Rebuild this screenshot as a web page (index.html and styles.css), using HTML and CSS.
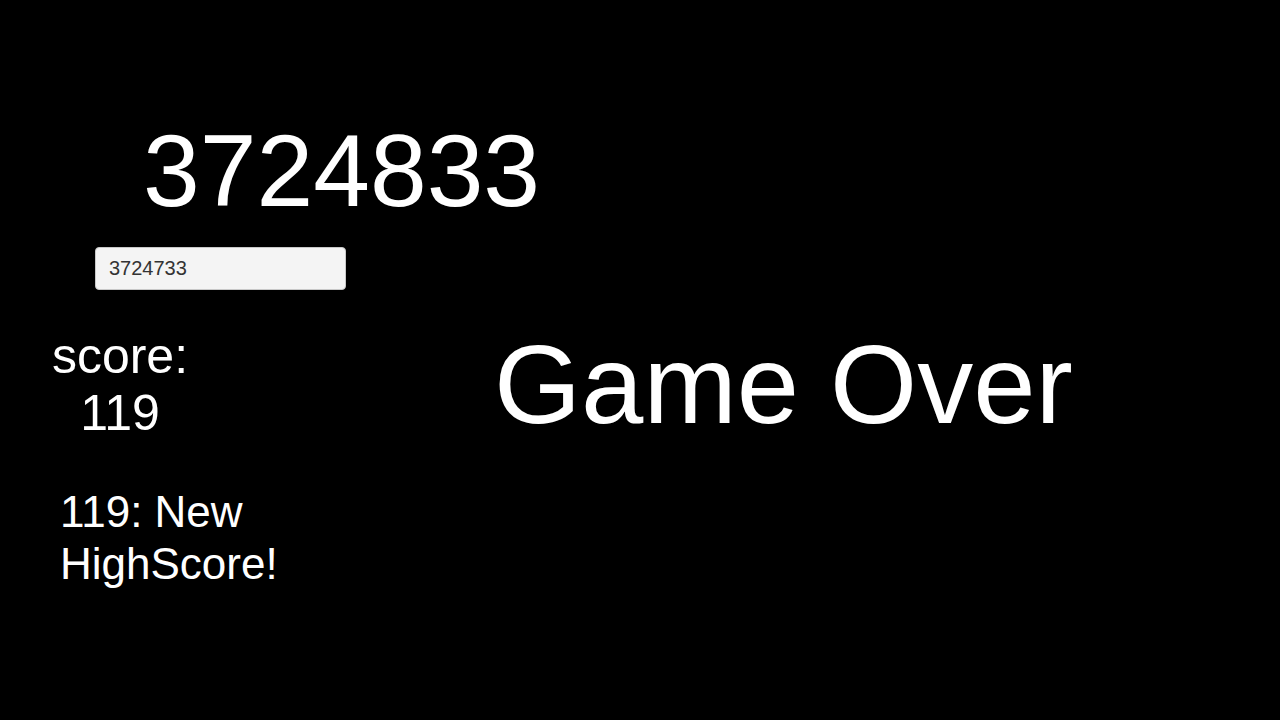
FILE: index.html
```html
<!DOCTYPE html>
<html>
<head>
<meta charset="utf-8">
<link rel="stylesheet" href="styles.css">
</head>
<body>
<div class="page">
  <div class="left">
    <div class="big">3724833</div>
    <input class="field" type="text" value="3724733">
    <div class="score">score:<br>119</div>
    <div class="hs">119: New<br>HighScore!</div>
  </div>
  <div class="right">
    <div class="over">Game Over</div>
  </div>
</div>
</body>
</html>
```
FILE: styles.css
```css
html, body {
  margin: 0;
  padding: 0;
  background: #000;
  width: 1280px;
  height: 720px;
  overflow: hidden;
}
.page {
  display: flex;
  flex-direction: row;
  font-family: "Liberation Sans", Arial, sans-serif;
  color: #fff;
}
.left {
  width: 450px;
  display: flex;
  flex-direction: column;
  align-items: flex-start;
}
.big {
  margin-top: 120px;
  margin-left: 143px;
  font-size: 102px;
  line-height: 102px;
}
.field {
  margin-top: 25px;
  margin-left: 95px;
  box-sizing: border-box;
  width: 251px;
  height: 43px;
  padding: 0 13px;
  font-family: "Liberation Sans", Arial, sans-serif;
  font-size: 20px;
  color: #333;
  background: #f4f4f4;
  border: 1px solid #c8c8c8;
  border-radius: 4px;
  outline: none;
}
.score {
  margin-top: 38px;
  width: 240px;
  text-align: center;
  font-size: 50px;
  line-height: 57px;
}
.hs {
  margin-top: 44px;
  margin-left: 60px;
  font-size: 44px;
  line-height: 52px;
}
.right {
  flex: 1;
}
.over {
  margin-top: 329px;
  margin-left: 44px;
  font-size: 112px;
  line-height: 112px;
}
```
